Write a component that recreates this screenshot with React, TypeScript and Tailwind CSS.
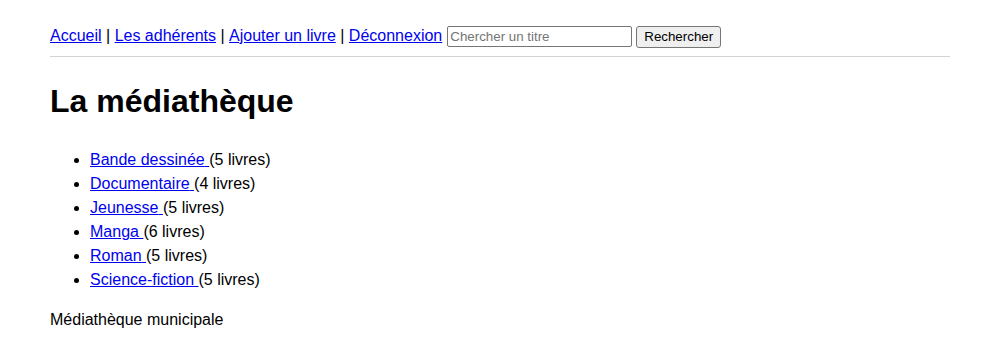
export default function App() {
  const categories = [
    { name: 'Bande dessinée', count: 5 },
    { name: 'Documentaire', count: 4 },
    { name: 'Jeunesse', count: 5 },
    { name: 'Manga', count: 6 },
    { name: 'Roman', count: 5 },
    { name: 'Science-fiction', count: 5 },
  ];

  return (
    <div className="min-h-[350px] bg-white px-[50px] pt-[24px] font-['Liberation_Sans',Arial,sans-serif] text-base leading-normal text-black">
      <nav className="flex items-baseline">
        <a href="#" className="text-[#0000ee] underline">Accueil</a>
        <span className="whitespace-pre"> | </span>
        <a href="#" className="text-[#0000ee] underline">Les adhérents</a>
        <span className="whitespace-pre"> | </span>
        <a href="#" className="text-[#0000ee] underline">Ajouter un livre</a>
        <span className="whitespace-pre"> | </span>
        <a href="#" className="text-[#0000ee] underline">Déconnexion</a>
        <form className="ml-[5px] flex items-baseline gap-[4px]" onSubmit={(e) => e.preventDefault()}>
          <input
            type="text"
            placeholder="Chercher un titre"
            className="h-[21px] w-[185px] rounded-[2px] border border-[#767676] px-[2px] text-[13.33px] leading-none placeholder:text-[#757575]"
          />
          <button
            type="submit"
            className="h-[22px] rounded-[3px] border border-[#767676] bg-[#efefef] px-[7px] text-[13.33px] leading-none text-black"
          >
            Rechercher
          </button>
        </form>
      </nav>
      <hr className="mt-[8px] border-t border-[#d3d3d3]" />
      <h1 className="mt-[20px] text-[32px] font-bold leading-normal">La médiathèque</h1>
      <ul className="mt-[23px] list-disc pl-[40px]">
        {categories.map((c) => (
          <li key={c.name}>
            <a href="#" className="text-[#0000ee] underline">{c.name} </a>
            ({c.count} livres)
          </li>
        ))}
      </ul>
      <footer className="mt-[16px]">Médiathèque municipale</footer>
    </div>
  );
}
